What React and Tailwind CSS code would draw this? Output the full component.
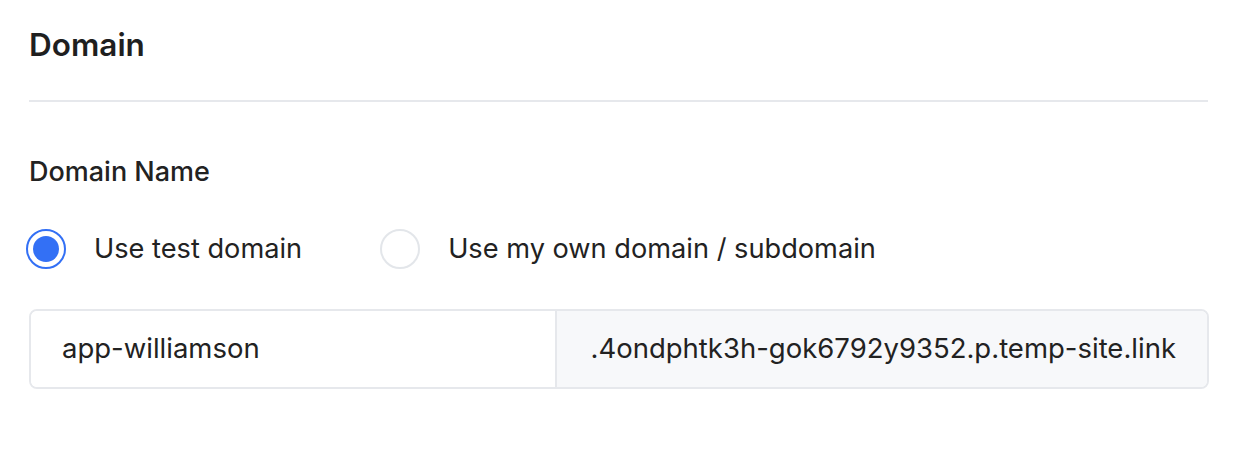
import React, { useState } from "react";

const Radio = ({ checked, label, onClick }) => (
  <button onClick={onClick} className="flex items-center gap-[28px]">
    <span
      className={
        checked
          ? "flex h-[40px] w-[40px] items-center justify-center rounded-full border-2 border-[#3370f5] bg-white"
          : "flex h-[40px] w-[40px] items-center justify-center rounded-full border-2 border-[#e3e6ea] bg-white"
      }
    >
      {checked && <span className="h-[26px] w-[26px] rounded-full bg-[#3370f5]" />}
    </span>
    <span className="text-[27.2px] text-[#222]">{label}</span>
  </button>
);

export default function App() {
  const [mode, setMode] = useState("test");

  return (
    <div className="min-h-screen bg-white px-[29px] pt-[25px] font-['Inter',sans-serif] text-[#222]">
      {/* Header */}
      <h2 className="text-[31.5px] font-semibold leading-[40px] text-[#1f1f1f]">Domain</h2>
      <div className="mt-[35px] mr-[1px] h-[2px] bg-[#e6e8ec]" />

      {/* Domain name */}
      <div className="mt-[52px] text-[27px] font-medium leading-[36px]">Domain Name</div>

      <div className="-ml-[3px] mt-[39px] flex items-center gap-[78px]">
        <Radio checked={mode === "test"} label="Use test domain" onClick={() => setMode("test")} />
        <Radio checked={mode === "own"} label="Use my own domain / subdomain" onClick={() => setMode("own")} />
      </div>

      <div className="mt-[39px] flex h-[80px] overflow-hidden rounded-[8px] border-2 border-[#e6e8ec]">
        <input
          type="text"
          defaultValue="app-williamson"
          className="w-[524px] bg-white px-[31px] text-[27.5px] text-[#222] outline-none"
        />
        <div className="flex flex-1 items-center justify-end border-l-2 border-[#e6e8ec] bg-[#f7f8fa] pr-[31px] text-[27.5px] text-[#222]">
          .4ondphtk3h-gok6792y9352.p.temp-site.link
        </div>
      </div>
    </div>
  );
}
